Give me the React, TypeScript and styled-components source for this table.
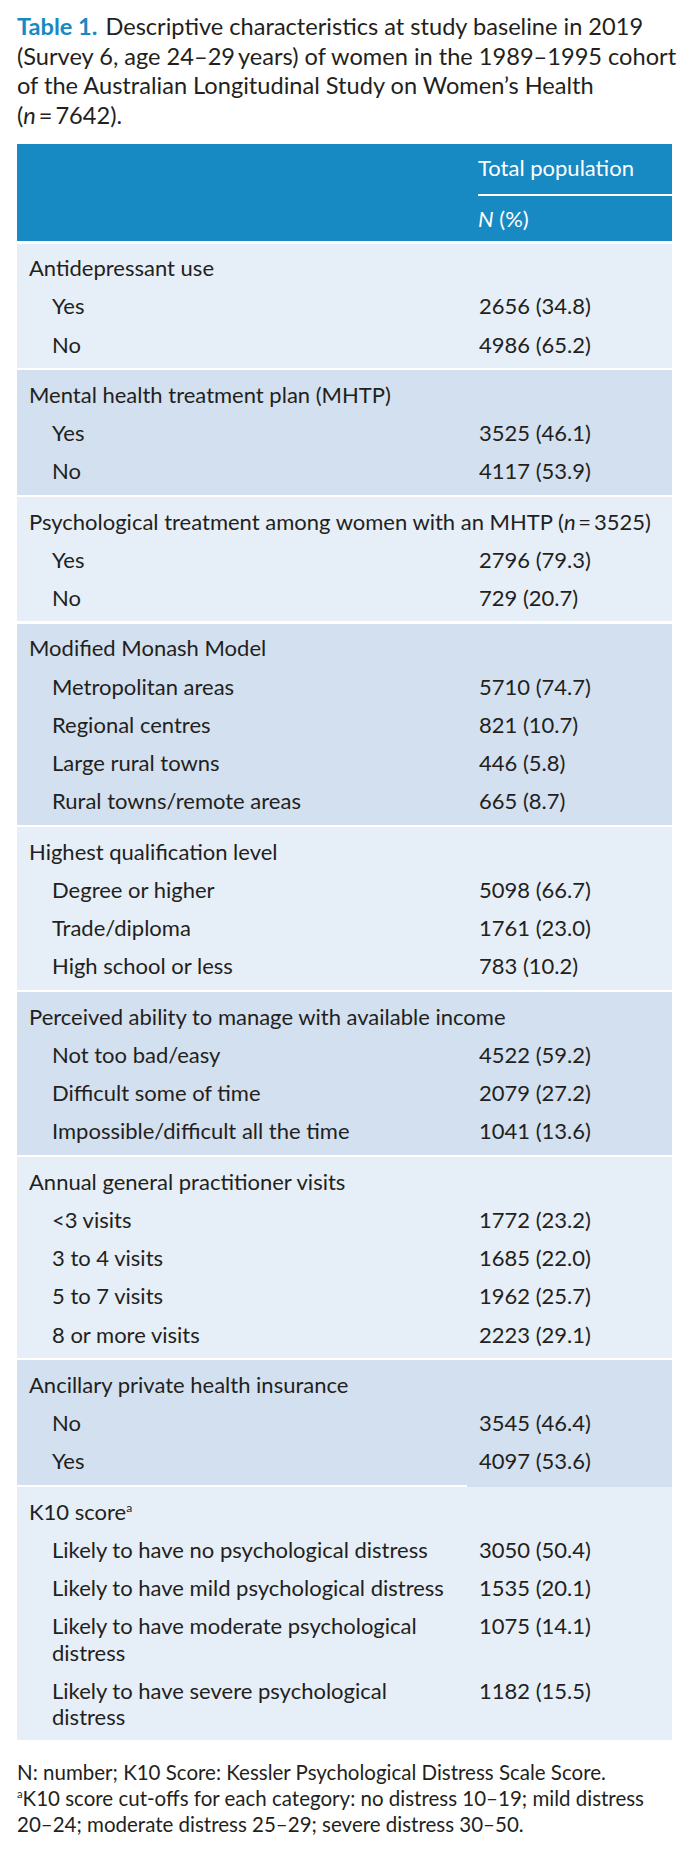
import React from 'react';
import styled, {createGlobalStyle} from 'styled-components';

const GlobalStyle = createGlobalStyle`
  body {
    margin: 0;
    background: #fff;
    font-family: Lato, "Open Sans", sans-serif;
    color: #231f20;
  }
`;

const LIGHT = '#e6eef7';
const DARK = '#d3e0ef';
const BLUE = '#1789c3';

const Page = styled.div`
  width: 689px;
  padding: 12px 17px 0;
  box-sizing: border-box;
`;

const Caption = styled.p`
  margin: 0 0 14px;
  font-size: 23.6px;
  line-height: 29.5px;
  white-space: nowrap;
`;

const CaptionLabel = styled.span`
  color: ${BLUE};
  font-weight: bold;
  margin-right: 8px;
`;

const Head = styled.div`
  display: grid;
  grid-template-columns: 453px 1fr;
  background: ${BLUE};
  color: #fff;
  font-size: 22px;
  line-height: 26px;
`;

const HeadCell = styled.div`
  margin-left: 8px;
`;

const HeadTop = styled.div`
  padding: 11px 0 13px;
`;

const HeadSub = styled.div`
  border-top: 2px solid #fff;
  padding: 10px 0 9px;
`;

const Rule = styled.div<{$tail?: string}>`
  height: 2.5px;
  background: ${p => (p.$tail ? `linear-gradient(to right, #fff 450px, ${p.$tail} 450px)` : '#fff')};
`;

const Group = styled.div<{$dark?: boolean}>`
  background: ${p => (p.$dark ? DARK : LIGHT)};
  padding: 5.5px 0 4px;
`;

const Row = styled.div`
  display: grid;
  grid-template-columns: 453px 1fr;
  font-size: 22px;
  line-height: 26.25px;
  padding: 6px 0;
`;

const Label = styled.div<{$sub?: boolean; $wide?: boolean}>`
  padding-left: ${p => (p.$sub ? 35 : 12)}px;
  padding-right: 8px;
  grid-column: ${p => (p.$wide ? '1 / -1' : 'auto')};
  white-space: ${p => (p.$wide ? 'nowrap' : 'normal')};
`;

const Value = styled.div`
  padding-left: 9px;
`;

const Sup = styled.sup`
  font-size: 0.55em;
  line-height: 0;
  vertical-align: 0.7em;
`;

const Notes = styled.div`
  margin-top: 20px;
  font-size: 20.5px;
  line-height: 25.7px;
  white-space: nowrap;
`;

type Item = [React.ReactNode, string];
type Block = {title: React.ReactNode; items: Item[]};

const blocks: Block[] = [
  {title: 'Antidepressant use', items: [['Yes', '2656 (34.8)'], ['No', '4986 (65.2)']]},
  {title: 'Mental health treatment plan (MHTP)', items: [['Yes', '3525 (46.1)'], ['No', '4117 (53.9)']]},
  {
    title: <>Psychological treatment among women with an MHTP (<i>n</i>{'\u2009=\u2009'}3525)</>,
    items: [['Yes', '2796 (79.3)'], ['No', '729 (20.7)']],
  },
  {
    title: 'Modified Monash Model',
    items: [
      ['Metropolitan areas', '5710 (74.7)'],
      ['Regional centres', '821 (10.7)'],
      ['Large rural towns', '446 (5.8)'],
      ['Rural towns/remote areas', '665 (8.7)'],
    ],
  },
  {
    title: 'Highest qualification level',
    items: [
      ['Degree or higher', '5098 (66.7)'],
      ['Trade/diploma', '1761 (23.0)'],
      ['High school or less', '783 (10.2)'],
    ],
  },
  {
    title: 'Perceived ability to manage with available income',
    items: [
      ['Not too bad/easy', '4522 (59.2)'],
      ['Difficult some of time', '2079 (27.2)'],
      ['Impossible/difficult all the time', '1041 (13.6)'],
    ],
  },
  {
    title: 'Annual general practitioner visits',
    items: [
      ['<3 visits', '1772 (23.2)'],
      ['3 to 4 visits', '1685 (22.0)'],
      ['5 to 7 visits', '1962 (25.7)'],
      ['8 or more visits', '2223 (29.1)'],
    ],
  },
  {title: 'Ancillary private health insurance', items: [['No', '3545 (46.4)'], ['Yes', '4097 (53.6)']]},
  {
    title: <>K10 score<Sup>a</Sup></>,
    items: [
      ['Likely to have no psychological distress', '3050 (50.4)'],
      ['Likely to have mild psychological distress', '1535 (20.1)'],
      [<>Likely to have moderate psychological<br />distress</>, '1075 (14.1)'],
      [<>Likely to have severe psychological<br />distress</>, '1182 (15.5)'],
    ],
  },
];

const App = () => (
  <Page>
    <GlobalStyle />
    <Caption>
      <CaptionLabel>Table 1.</CaptionLabel>
      Descriptive characteristics at study baseline in 2019
      <br />
      (Survey 6, age 24–29{'\u2009'}years) of women in the 1989–1995 cohort
      <br />
      of the Australian Longitudinal Study on Women’s Health
      <br />
      (<i>n</i>{'\u2009=\u2009'}7642).
    </Caption>

    <Head>
      <div />
      <HeadCell>
        <HeadTop>Total population</HeadTop>
        <HeadSub><i>N</i> (%)</HeadSub>
      </HeadCell>
    </Head>

    {blocks.map((block, id) => (
      <React.Fragment key={id}>
        <Rule $tail={id === blocks.length - 1 ? DARK : undefined} />
        <Group $dark={id % 2 === 1}>
          <Row>
            <Label $wide>{block.title}</Label>
          </Row>
          {block.items.map(([label, value], i) => (
            <Row key={i}>
              <Label $sub>{label}</Label>
              <Value>{value}</Value>
            </Row>
          ))}
        </Group>
      </React.Fragment>
    ))}

    <Notes>
      N: number; K10 Score: Kessler Psychological Distress Scale Score.
      <br />
      <Sup>a</Sup>K10 score cut-offs for each category: no distress 10–19; mild distress
      <br />
      20–24; moderate distress 25–29; severe distress 30–50.
    </Notes>
  </Page>
);

export default App;
